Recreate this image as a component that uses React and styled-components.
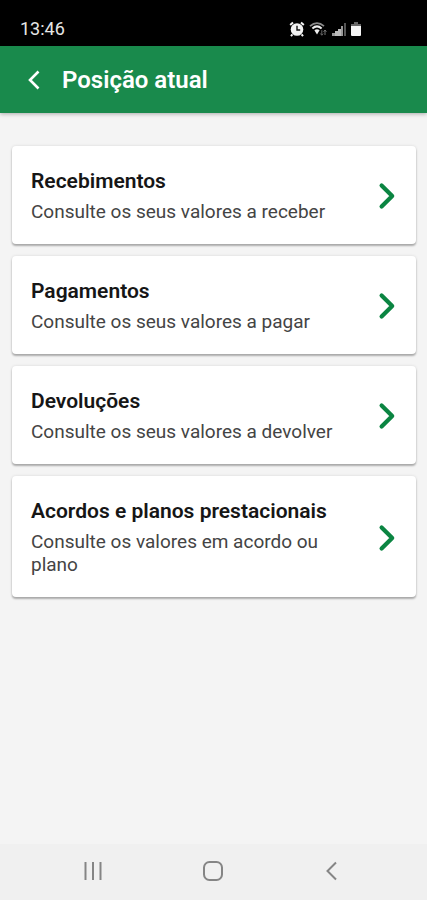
import React from "react";
import styled, { createGlobalStyle } from "styled-components";

const GlobalStyle = createGlobalStyle`
  * {
    box-sizing: border-box;
  }
  body {
    margin: 0;
    background: #f4f4f4;
    font-family: Roboto, "Noto Sans", sans-serif;
  }
`;

const ScreenMainDivBox = styled.div`
  display: flex;
  flex-direction: column;
  min-height: 100vh;
`;

const StatusBar = styled.div`
  display: flex;
  align-items: center;
  justify-content: space-between;
  height: 46px;
  padding: 12px 65px 0 20px;
  background: #000;
  color: #e6e6e6;
  font-size: 18px;
  line-height: 24px;
`;

const StatusIcons = styled.div`
  display: flex;
  align-items: center;
  gap: 4px;
  svg {
    display: block;
  }
`;

const Header = styled.header`
  display: flex;
  align-items: center;
  gap: 19px;
  height: 67px;
  padding: 0 24px;
  background: #198a4c;
  box-shadow: 0 1px 4px rgba(0, 0, 0, 0.3);
  h1 {
    margin: 0;
    color: #fff;
    font-size: 24px;
    font-weight: 600;
    line-height: 32px;
  }
`;

const IconButton = styled.button`
  display: flex;
  align-items: center;
  justify-content: center;
  padding: 0;
  border: 0;
  background: none;
  color: ${(props) => props.$color};
  cursor: pointer;
`;

const CardList = styled.main`
  display: flex;
  flex: 1;
  flex-direction: column;
  gap: 12px;
  padding: 33px 11px 12px 12px;
`;

const Card = styled.button`
  display: flex;
  align-items: center;
  justify-content: space-between;
  gap: 24px;
  width: 100%;
  padding: 23px 19px 21px;
  border: 0;
  border-radius: 4px;
  background: #fff;
  box-shadow:
    0 2px 2px rgba(0, 0, 0, 0.28),
    0 0 3px rgba(0, 0, 0, 0.12);
  font-family: inherit;
  text-align: left;
  cursor: pointer;
  svg {
    flex: none;
  }
`;

const CardText = styled.span`
  display: flex;
  flex-direction: column;
  gap: 6px;
`;

const CardTitle = styled.span`
  color: #161616;
  font-size: 21px;
  font-weight: 600;
  line-height: 25px;
`;

const CardDescription = styled.span`
  color: #444;
  font-size: 19px;
  font-weight: 400;
  line-height: 23px;
`;

const NavigationBar = styled.nav`
  display: flex;
  align-items: center;
  justify-content: space-between;
  height: 56px;
  padding: 0 82px 2px 80px;
  background: #f0f0f0;
`;

const AlarmIcon = () => (
  <svg width="16" height="16" viewBox="0 0 16 16" fill="none">
    <circle cx="8" cy="8.5" r="6.3" fill="#f2f2f2" />
    <path
      d="M1.2 4 4 1.4M14.8 4 12 1.4M3.4 13.4 2 15.2M12.6 13.4 14 15.2"
      stroke="#f2f2f2"
      strokeWidth="2"
    />
    <path d="M8 4.8V9h3.2" stroke="#111" strokeWidth="1.4" />
  </svg>
);

const WifiIcon = () => (
  <svg width="19" height="16" viewBox="0 0 19 16" fill="none">
    <path d="M1 5.2Q8 -1 15 5.2" stroke="#8c8c8c" strokeWidth="1.8" />
    <path d="M3.4 7.4Q8 3.4 12.6 7.4" stroke="#eee" strokeWidth="2" />
    <path d="M5.4 9.2Q8 7.2 10.6 9.2L8 13.4Z" fill="#eee" />
    <path d="M12.8 9.2v5M11.2 12.4l1.6 1.8 1.4-1.6" stroke="#666" />
    <path d="M16 14v-5M14.6 10.8 16 9l1.4 1.8" stroke="#777" />
  </svg>
);

const SignalIcon = () => (
  <svg width="14" height="15" viewBox="0 0 14 15">
    <path d="M0 11h3v3H0z" fill="#999" />
    <path d="M3 9h3v5H3zM6 7h3v7H6z" fill="#bbb" />
    <path d="M9 4h2v10H9z" fill="#999" />
    <path d="M12 1h2v13h-2z" fill="#555" />
  </svg>
);

const BatteryIcon = () => (
  <svg width="12" height="16" viewBox="0 0 12 16">
    <path d="M4 1h4v2h3v3H1V3h3z" fill="#666" />
    <path d="M1 5h10v9a1 1 0 0 1-1 1H2a1 1 0 0 1-1-1z" fill="#f5f5f5" />
  </svg>
);

const BackIcon = () => (
  <svg width="19" height="24" viewBox="0 0 19 24" fill="none">
    <path d="M14.5 3.5 6 12l8.5 8.5" stroke="currentColor" strokeWidth="2.6" />
  </svg>
);

const ChevronIcon = () => (
  <svg width="20" height="28" viewBox="0 0 20 28" fill="none">
    <path
      d="M4.6 3.4 15.2 14 4.6 24.6"
      stroke="#0b8542"
      strokeWidth="4.2"
      strokeLinecap="round"
      strokeLinejoin="round"
    />
  </svg>
);

const RecentIcon = () => (
  <svg width="26" height="22" viewBox="0 0 26 22" fill="none">
    <path d="M5.5 2v18M13 2v18M20.5 2v18" stroke="currentColor" strokeWidth="2" />
  </svg>
);

const HomeIcon = () => (
  <svg width="22" height="22" viewBox="0 0 22 22" fill="none">
    <rect
      x="2"
      y="2"
      width="18"
      height="18"
      rx="5.5"
      stroke="currentColor"
      strokeWidth="2"
    />
  </svg>
);

const NavBackIcon = () => (
  <svg width="26" height="22" viewBox="0 0 26 22" fill="none">
    <path d="M17 2.5 8.5 11l8.5 8.5" stroke="currentColor" strokeWidth="2" />
  </svg>
);

const Menu_Lists = [
  {
    title: "Recebimentos",
    description: "Consulte os seus valores a receber",
  },
  {
    title: "Pagamentos",
    description: "Consulte os seus valores a pagar",
  },
  {
    title: "Devoluções",
    description: "Consulte os seus valores a devolver",
  },
  {
    title: "Acordos e planos prestacionais",
    description: "Consulte os valores em acordo ou plano",
  },
];

const App = () => {
  return (
    <>
      <GlobalStyle />
      <ScreenMainDivBox>
        <StatusBar>
          <span>13:46</span>
          <StatusIcons>
            <AlarmIcon />
            <WifiIcon />
            <SignalIcon />
            <BatteryIcon />
          </StatusIcons>
        </StatusBar>

        <Header>
          <IconButton type="button" $color="#fff" aria-label="Voltar">
            <BackIcon />
          </IconButton>
          <h1>Posição atual</h1>
        </Header>

        <CardList>
          {Menu_Lists.map((list) => (
            <Card key={list.title} type="button">
              <CardText>
                <CardTitle>{list.title}</CardTitle>
                <CardDescription>{list.description}</CardDescription>
              </CardText>
              <ChevronIcon />
            </Card>
          ))}
        </CardList>

        {/* barra de navegação do sistema */}
        <NavigationBar>
          <IconButton type="button" $color="#858585" aria-label="Recentes">
            <RecentIcon />
          </IconButton>
          <IconButton type="button" $color="#858585" aria-label="Início">
            <HomeIcon />
          </IconButton>
          <IconButton type="button" $color="#858585" aria-label="Anterior">
            <NavBackIcon />
          </IconButton>
        </NavigationBar>
      </ScreenMainDivBox>
    </>
  );
};

export default App;
